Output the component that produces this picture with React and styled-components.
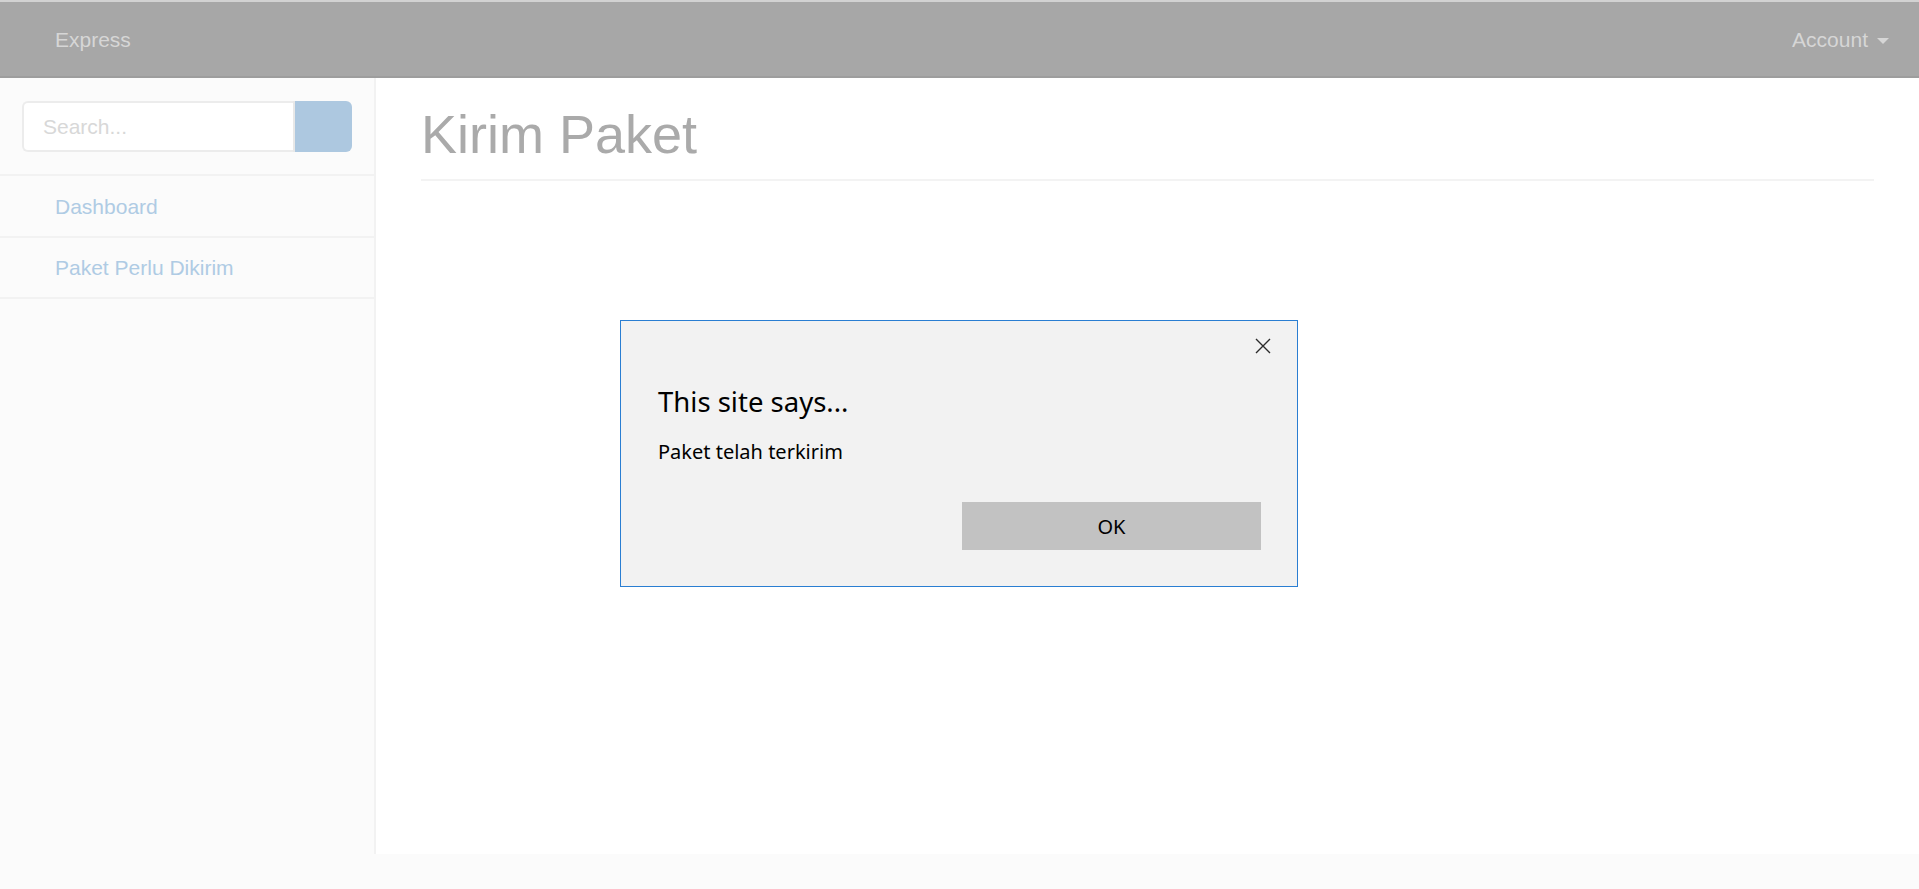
import React from "react";
import styled, { createGlobalStyle } from "styled-components";

const Global = createGlobalStyle`
  html, body {
    margin: 0;
    padding: 0;
    background: #fbfbfb;
    font-family: "Liberation Sans", Arial, sans-serif;
  }
  * { box-sizing: border-box; }
`;

const Page = styled.div`
  width: 100%;
  min-height: 889px;
  background: #fbfbfb;
`;

const Navbar = styled.header`
  height: 78px;
  background: #a7a7a7;
  border-top: 2px solid #d2d2d2;
  border-bottom: 2px solid #9d9d9d;
  display: flex;
  align-items: center;
  justify-content: space-between;
  padding: 0 30px 0 55px;
`;

const Brand = styled.a`
  color: #d6d6d6;
  font-size: 21px;
  text-decoration: none;
  padding-top: 1px;
`;

const AccountMenu = styled.a`
  color: #d6d6d6;
  font-size: 21px;
  display: flex;
  align-items: center;
  gap: 9px;
  padding-top: 1px;
`;

const Caret = styled.span`
  width: 0;
  height: 0;
  border-top: 6px solid #d6d6d6;
  border-left: 6px solid transparent;
  border-right: 6px solid transparent;
  margin-top: 2px;
`;

const Body = styled.div`
  display: flex;
  height: 776px;
`;

const Sidebar = styled.nav`
  width: 376px;
  flex-shrink: 0;
  background: #fbfbfb;
  border-right: 2px solid #f2f2f2;
`;

const SearchArea = styled.div`
  height: 98px;
  padding: 23px 22px 0 22px;
  border-bottom: 2px solid #f2f2f2;
  display: flex;
`;

const SearchInput = styled.div`
  flex: 1;
  height: 51px;
  background: #ffffff;
  border: 2px solid #ececec;
  border-right: none;
  border-radius: 6px 0 0 6px;
  color: #d8d8d8;
  font-size: 21px;
  display: flex;
  align-items: center;
  padding-left: 19px;
`;

const SearchButton = styled.div`
  width: 59px;
  height: 51px;
  background: #adc8e0;
  border-left: 2px solid #e8e8e8;
  border-radius: 0 6px 6px 0;
`;

const NavItem = styled.a`
  display: flex;
  align-items: center;
  height: ${(p) => p.$h || 62}px;
  padding-left: 55px;
  border-bottom: 2px solid #f2f2f2;
  color: #afcbe4;
  font-size: 21px;
  text-decoration: none;
  padding-top: 1px;
`;

const PageWrapper = styled.main`
  flex: 1;
  background: #ffffff;
  padding: 0 45px;
`;

const PageHeader = styled.h1`
  margin: 27px 0 0 0;
  padding-bottom: 15px;
  border-bottom: 2px solid #f3f3f3;
  font-size: 54px;
  line-height: 1.1;
  font-weight: 400;
  color: #aaaaaa;
`;

const Dialog = styled.div`
  position: fixed;
  left: 620px;
  top: 320px;
  width: 678px;
  height: 267px;
  background: #f2f2f2;
  border: 1px solid #2a7ed2;
  font-family: "Noto Sans", "Open Sans", sans-serif;
  color: #000;
  display: flex;
  flex-direction: column;
  padding: 64px 36px 36px 37px;
`;

const CloseBtn = styled.button`
  position: absolute;
  top: 16px;
  right: 26px;
  width: 17px;
  height: 17px;
  padding: 0;
  border: none;
  background: transparent;
  display: flex;
  align-items: center;
  justify-content: center;
`;

const DialogTitle = styled.div`
  font-size: 27.5px;
  line-height: 34px;
`;

const DialogMessage = styled.div`
  margin-top: 19px;
  font-size: 20px;
  line-height: 28px;
`;

const ButtonRow = styled.div`
  margin-top: auto;
  display: flex;
  justify-content: flex-end;
`;

const OkButton = styled.button`
  width: 299px;
  height: 48px;
  background: #c2c2c2;
  border: none;
  font-family: "Noto Sans", "Open Sans", sans-serif;
  font-size: 20px;
  color: #000;
  padding: 0;
`;

export default function App() {
  return (
    <Page>
      <Global />
      <Navbar>
        <Brand>Express</Brand>
        <AccountMenu>
          Account <Caret />
        </AccountMenu>
      </Navbar>
      <Body>
        <Sidebar>
          <SearchArea>
            <SearchInput>Search...</SearchInput>
            <SearchButton />
          </SearchArea>
          <NavItem $h={62}>Dashboard</NavItem>
          <NavItem $h={61}>Paket Perlu Dikirim</NavItem>
        </Sidebar>
        <PageWrapper>
          <PageHeader>Kirim Paket</PageHeader>
        </PageWrapper>
      </Body>
      <Dialog>
        <CloseBtn aria-label="Close">
          <svg width="16" height="16" viewBox="0 0 16 16">
            <path d="M1 1 L15 15 M15 1 L1 15" stroke="#2b2b2b" strokeWidth="1.4" fill="none" />
          </svg>
        </CloseBtn>
        <DialogTitle>This site says...</DialogTitle>
        <DialogMessage>Paket telah terkirim</DialogMessage>
        <ButtonRow>
          <OkButton>OK</OkButton>
        </ButtonRow>
      </Dialog>
    </Page>
  );
}
